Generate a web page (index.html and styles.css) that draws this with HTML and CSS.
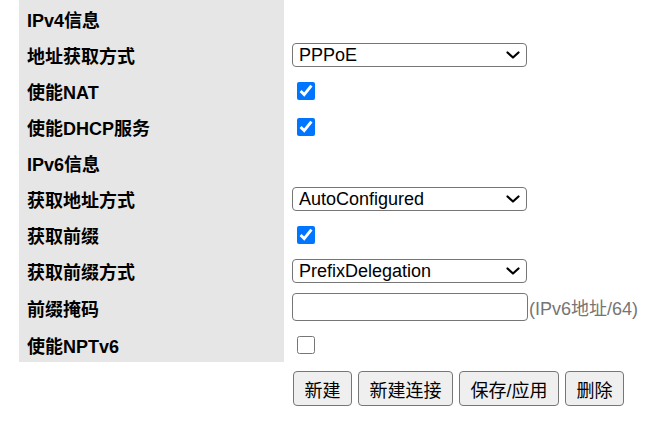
FILE: index.html
```html
<!DOCTYPE html>
<html>
<head>
<meta charset="utf-8">
<link rel="stylesheet" href="styles.css">
</head>
<body>
<div class="form">
  <div class="label">IPv4信息</div><div class="field"></div>
  <div class="label">地址获取方式</div>
  <div class="field"><select class="sel"><option>PPPoE</option></select></div>
  <div class="label">使能NAT</div>
  <div class="field"><input type="checkbox" class="chk" checked></div>
  <div class="label">使能DHCP服务</div>
  <div class="field"><input type="checkbox" class="chk" checked></div>
  <div class="label">IPv6信息</div><div class="field"></div>
  <div class="label">获取地址方式</div>
  <div class="field"><select class="sel"><option>AutoConfigured</option></select></div>
  <div class="label">获取前缀</div>
  <div class="field"><input type="checkbox" class="chk" checked></div>
  <div class="label">获取前缀方式</div>
  <div class="field"><select class="sel"><option>PrefixDelegation</option></select></div>
  <div class="label tall">前缀掩码</div>
  <div class="field tall"><input type="text" class="txt"><span class="hint">(IPv6地址/64)</span></div>
  <div class="label">使能NPTv6</div>
  <div class="field"><input type="checkbox" class="chk"></div>
  <div class="blank"></div>
  <div class="buttons">
    <button class="btn">新建</button>
    <button class="btn">新建连接</button>
    <button class="btn">保存/应用</button>
    <button class="btn">删除</button>
  </div>
</div>
</body>
</html>
```
FILE: styles.css
```css
html, body {
  margin: 0;
  padding: 0;
  background: #fff;
}
body {
  font-family: "Liberation Sans", Arial, "Noto Sans CJK SC", sans-serif;
  font-size: 18px;
  color: #000;
}
.form {
  display: grid;
  grid-template-columns: 265px auto;
  margin-left: 19px;
}
.label {
  background: #e6e6e6;
  font-weight: bold;
  height: 36px;
  display: flex;
  align-items: center;
  padding: 2px 8px 0;
  box-sizing: border-box;
  white-space: nowrap;
}
.field {
  height: 36px;
  display: flex;
  align-items: center;
  padding-left: 8px;
}
.label.tall, .field.tall {
  height: 38px;
}
.sel {
  -webkit-appearance: none;
  appearance: none;
  width: 235px;
  height: 24px;
  box-sizing: border-box;
  font-family: "Liberation Sans", Arial, sans-serif;
  font-size: 18px;
  line-height: 20px;
  border: 1px solid #767676;
  border-radius: 4px;
  background: #fff url("data:image/svg+xml,%3Csvg xmlns='http://www.w3.org/2000/svg' width='14' height='8' viewBox='0 0 14 8'%3E%3Cpath d='M1.5 1.5 L7 6.5 L12.5 1.5' fill='none' stroke='%23000' stroke-width='2.2' stroke-linecap='round' stroke-linejoin='round'/%3E%3C/svg%3E") no-repeat right 6px center;
  color: #000;
  padding: 0 26px 0 6px;
  margin: 1px 0 0;
}
.chk {
  width: 18px;
  height: 18px;
  margin: 1px 0 0 5px;
}
.txt {
  width: 236px;
  height: 28px;
  box-sizing: border-box;
  border: 1px solid #767676;
  border-radius: 4px;
  margin: 0;
  font-size: 18px;
}
.hint {
  color: #757575;
  margin-left: 1px;
  white-space: nowrap;
}
.buttons {
  display: flex;
  gap: 6px;
  padding: 9px 0 0 9px;
}
.btn {
  font-family: "Liberation Sans", Arial, "Noto Sans CJK SC", sans-serif;
  font-size: 18px;
  height: 35px;
  padding: 0 10.5px;
  border: 1px solid #767676;
  border-radius: 4px;
  background: #efefef;
  color: #000;
}
```
